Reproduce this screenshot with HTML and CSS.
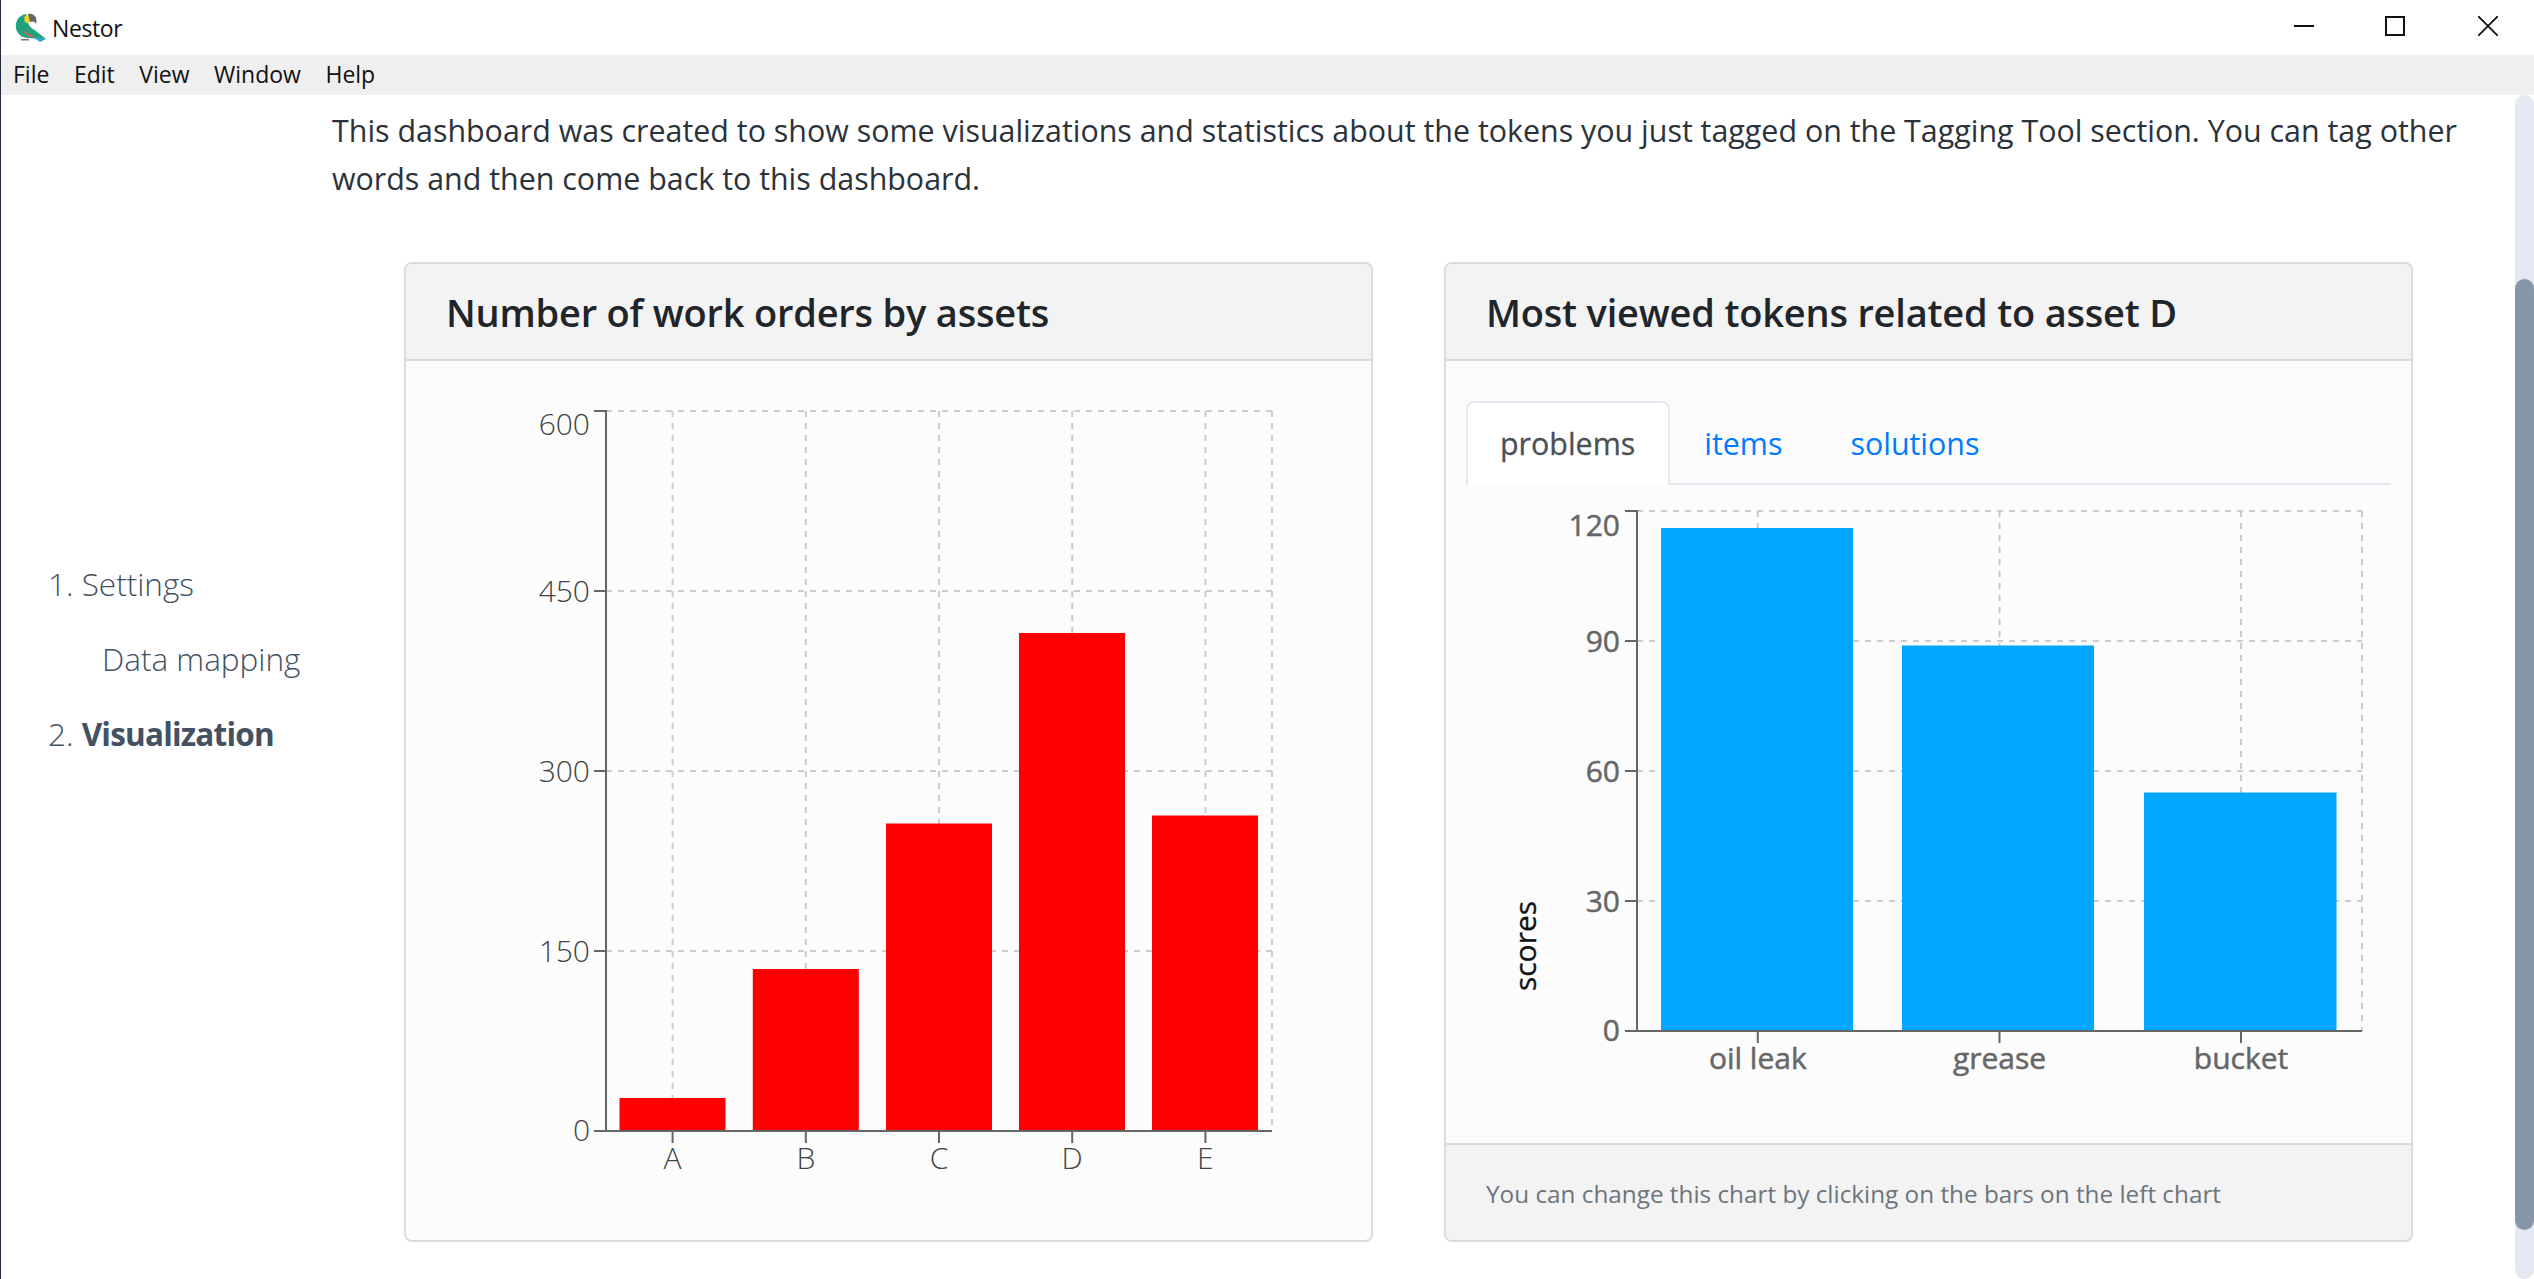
FILE: index.html
```html
<!DOCTYPE html>
<html lang="en">
<head>
    <meta charset="UTF-8">
    <title>Nestor</title>
    <link rel="stylesheet" href="styles.css">
</head>
<body>
    <div class="titlebar">
        <svg class="app-icon" width="40" height="36" viewBox="0 0 40 36">
            <path d="M16 5C9 6 5 12 6 19C7 25 12 29 18 29L36 30C31 26 26 22 23 20C20 18 18 16 18 12Z" fill="#1fa37f"/>
            <ellipse cx="17.5" cy="10" rx="3.2" ry="4" fill="#f5d327"/>
            <path d="M18 5C24 4 28 9 26 15C25 12 22 12 20 13Z" fill="#666"/>
            <path d="M13 21C17 24 21 27 25 27C22 29 16 28 13 21Z" fill="#e25a4f"/>
            <path d="M24 29L36 30L30 33Z" fill="#2f9fe0"/>
            <path d="M11 30h8v1.5h-8z" fill="#777"/>
        </svg>
        <span class="app-name">Nestor</span>
        <div class="window-buttons">
            <svg width="20" height="20" viewBox="0 0 20 20"><path d="M0 10H20" stroke="#111" stroke-width="2"/></svg>
            <svg width="20" height="20" viewBox="0 0 20 20"><rect x="1" y="1" width="18" height="18" fill="none" stroke="#111" stroke-width="2"/></svg>
            <svg class="close" width="20" height="20" viewBox="0 0 20 20"><path d="M0 0L20 20M20 0L0 20" stroke="#111" stroke-width="1.8"/></svg>
        </div>
    </div>
    <div class="menubar">
        <span>File</span>
        <span>Edit</span>
        <span>View</span>
        <span>Window</span>
        <span>Help</span>
    </div>

    <div class="main">
        <div class="sidebar">
            <div class="step">1. Settings</div>
            <div class="step sub">Data mapping</div>
            <div class="step">2. <b>Visualization</b></div>
        </div>

        <div class="content">
            <p class="intro">This dashboard was created to show some visualizations and statistics about the tokens you just tagged on the Tagging Tool section. You can tag other words and then come back to this dashboard.</p>

            <div class="cards">
                <div class="card">
                    <div class="card-header">Number of work orders by assets</div>
                    <div class="card-body">
                        <svg class="chart" width="965" height="880" viewBox="406 361 965 880">
                            <g class="grid">
                                <path d="M606 411H1272M606 591H1272M606 771H1272M606 951H1272"/>
                                <path d="M672.6 411V1131M805.8 411V1131M939 411V1131M1072.2 411V1131M1205.4 411V1131M1272 411V1131"/>
                            </g>
                            <g fill="#ff0000">
                                <rect x="619.5" y="1098" width="106" height="33"/>
                                <rect x="752.8" y="969" width="106" height="162"/>
                                <rect x="886" y="823.5" width="106" height="307.5"/>
                                <rect x="1019" y="633" width="106" height="498"/>
                                <rect x="1152" y="815.5" width="106" height="315.5"/>
                            </g>
                            <path class="axis" d="M594 411H606V1131M594 591H606M594 771H606M594 951H606M594 1131H1272M672.6 1131V1143M805.8 1131V1143M939 1131V1143M1072.2 1131V1143M1205.4 1131V1143"/>
                            <g class="tick light">
                                <text x="590" y="435" text-anchor="end">600</text>
                                <text x="590" y="601.5" text-anchor="end">450</text>
                                <text x="590" y="781.5" text-anchor="end">300</text>
                                <text x="590" y="961.5" text-anchor="end">150</text>
                                <text x="590" y="1141" text-anchor="end">0</text>
                                <text x="672.6" y="1169" text-anchor="middle">A</text>
                                <text x="805.8" y="1169" text-anchor="middle">B</text>
                                <text x="939" y="1169" text-anchor="middle">C</text>
                                <text x="1072.2" y="1169" text-anchor="middle">D</text>
                                <text x="1205.4" y="1169" text-anchor="middle">E</text>
                            </g>
                        </svg>
                    </div>
                </div>

                <div class="card">
                    <div class="card-header">Most viewed tokens related to asset D</div>
                    <div class="card-body tabbed">
                        <div class="tabs">
                            <a class="tab active">problems</a>
                            <a class="tab">items</a>
                            <a class="tab">solutions</a>
                        </div>
                        <svg class="chart" width="926" height="641" viewBox="1466 485 926 641">
                            <g class="grid">
                                <path d="M1637 511H2362M1637 641H2362M1637 771H2362M1637 901H2362"/>
                                <path d="M1757.8 511V1031M1999.5 511V1031M2241 511V1031M2362 511V1031"/>
                            </g>
                            <g fill="#00a6ff">
                                <rect x="1661" y="528" width="192" height="503"/>
                                <rect x="1902" y="645.5" width="192" height="385.5"/>
                                <rect x="2144" y="792.5" width="192.5" height="238.5"/>
                            </g>
                            <path class="axis" d="M1625 511H1637V1031M1625 641H1637M1625 771H1637M1625 901H1637M1625 1031H2362M1757.8 1031V1043M1999.5 1031V1043M2241 1031V1043"/>
                            <g class="tick">
                                <text x="1620" y="535.5" text-anchor="end">120</text>
                                <text x="1620" y="651.5" text-anchor="end">90</text>
                                <text x="1620" y="781.5" text-anchor="end">60</text>
                                <text x="1620" y="911.5" text-anchor="end">30</text>
                                <text x="1620" y="1041" text-anchor="end">0</text>
                                <text x="1757.8" y="1069" text-anchor="middle">oil leak</text>
                                <text x="1999.5" y="1069" text-anchor="middle">grease</text>
                                <text x="2241" y="1069" text-anchor="middle">bucket</text>
                            </g>
                            <text class="axis-label" x="1536" y="946" text-anchor="middle" transform="rotate(-90 1536 946)">scores</text>
                        </svg>
                    </div>
                    <div class="card-footer">You can change this chart by clicking on the bars on the left chart</div>
                </div>
            </div>
        </div>

        <div class="scrollbar">
            <div class="thumb"></div>
        </div>
    </div>
</body>
</html>
```

FILE: styles.css
```css
body {
    margin: 0;
    height: 1279px;
    overflow: hidden;
    background: #fff;
    border-left: 1px solid #1f2a3a;
    box-sizing: border-box;
    font-family: "Open Sans", "Noto Sans", sans-serif;
    color: #212529;
}
.titlebar {
    height: 55px;
    display: flex;
    align-items: center;
    padding-left: 9px;
}
.app-icon {
    margin-top: -2px;
}
.app-name {
    font-size: 23px;
    margin-left: 2px;
    letter-spacing: -0.4px;
    color: #111;
}
.window-buttons {
    margin-left: auto;
    margin-top: -3px;
    display: flex;
    gap: 71px;
    padding-right: 36px;
}
.close {
    margin-left: 2px;
}
.menubar {
    height: 40px;
    box-sizing: border-box;
    padding: 0 0 2px 12px;
    background: #efefef;
    display: flex;
    align-items: center;
    gap: 24.5px;
    font-size: 23px;
    color: #111;
}
.main {
    display: flex;
    height: 1184px;
}
.sidebar {
    width: 331px;
    flex-shrink: 0;
    box-sizing: border-box;
    padding: 465px 0 0 47px;
    display: flex;
    flex-direction: column;
    gap: 27px;
    color: #435162;
    font-size: 31.5px;
    line-height: 48px;
    font-weight: 300;
}
.step b {
    font-weight: 700;
    letter-spacing: -0.8px;
}
.sub {
    padding-left: 54px;
}
.content {
    flex: 1;
    min-width: 0;
    padding-top: 12px;
}
.intro {
    margin: 0 0 59px 0;
    font-size: 30.4px;
    line-height: 48px;
    color: #2b323a;
    padding-right: 20px;
}
.cards {
    display: flex;
    gap: 71px;
    padding-left: 72px;
}
.card {
    width: 969px;
    height: 980px;
    box-sizing: border-box;
    border: 2px solid #dcdcdc;
    border-radius: 8px;
    background: #fcfcfc;
    display: flex;
    flex-direction: column;
    overflow: hidden;
}
.card-header {
    height: 97px;
    flex-shrink: 0;
    box-sizing: border-box;
    background: #f3f3f3;
    border-bottom: 2px solid #d9d9d9;
    padding-left: 40px;
    display: flex;
    align-items: center;
    font-size: 38px;
    font-weight: 600;
    letter-spacing: -0.2px;
}
.card-body {
    flex: 1;
}
.card-body.tabbed {
    padding: 40px 20px 0;
}
.chart {
    display: block;
}
.tabs {
    display: flex;
    border-bottom: 2px solid #e4e8f1;
    height: 82px;
}
.tab {
    height: 84px;
    box-sizing: border-box;
    padding: 0 34px;
    font-size: 30.4px;
    line-height: 86px;
    color: #007bff;
}
.tab.active {
    color: #495057;
    background: #fff;
    border: 2px solid #e4e8f1;
    border-bottom: none;
    border-radius: 8px 8px 0 0;
    line-height: 82px;
    padding: 0 33px 0 32px;
    -webkit-text-stroke: 0.3px #495057;
}
.card-footer {
    height: 97px;
    flex-shrink: 0;
    box-sizing: border-box;
    background: #f3f3f3;
    border-top: 2px solid #d9d9d9;
    padding: 2px 0 0 40px;
    display: flex;
    align-items: center;
    font-size: 24.3px;
    color: #6c757d;
}
.scrollbar {
    width: 19px;
    flex-shrink: 0;
    background: #e4e8f1;
    border-radius: 10px;
    padding-top: 184px;
}
.thumb {
    height: 951px;
    background: #8796a8;
    border-radius: 10px;
}
.grid path {
    fill: none;
    stroke: #ccc;
    stroke-width: 2;
    stroke-dasharray: 6 6;
}
.axis {
    fill: none;
    stroke: #666;
    stroke-width: 2;
}
.tick text {
    font-size: 30px;
    fill: #666;
    stroke: #666;
    stroke-width: 0.5;
}
.tick.light text {
    font-weight: 300;
    fill: #444;
    stroke: none;
}
.axis-label {
    font-size: 30px;
    fill: #111;
    stroke: #111;
    stroke-width: 0.3;
}
```
